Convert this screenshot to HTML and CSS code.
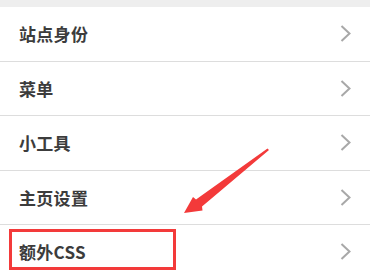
FILE: index.html
```html
<!DOCTYPE html>
<html lang="zh-CN">
  <head>
    <meta charset="UTF-8" />
    <meta name="viewport" content="width=device-width, initial-scale=1.0" />
    <title>自定义</title>
    <link rel="stylesheet" href="styles.css">
  </head>
  <body>
    <div class="topbar"></div>

    <ul class="menu">
      <li class="menu-item">
        <span class="label">站点身份</span>
        <svg class="chevron" width="11" height="17" viewBox="0 0 11 17"><polyline points="1.5,1 9.5,8.5 1.5,16" /></svg>
      </li>
      <li class="menu-item">
        <span class="label">菜单</span>
        <svg class="chevron" width="11" height="17" viewBox="0 0 11 17"><polyline points="1.5,1 9.5,8.5 1.5,16" /></svg>
      </li>
      <li class="menu-item">
        <span class="label">小工具</span>
        <svg class="chevron" width="11" height="17" viewBox="0 0 11 17"><polyline points="1.5,1 9.5,8.5 1.5,16" /></svg>
      </li>
      <li class="menu-item">
        <span class="label">主页设置</span>
        <svg class="chevron" width="11" height="17" viewBox="0 0 11 17"><polyline points="1.5,1 9.5,8.5 1.5,16" /></svg>
      </li>
      <li class="menu-item">
        <span class="label">额外CSS</span>
        <svg class="chevron" width="11" height="17" viewBox="0 0 11 17"><polyline points="1.5,1 9.5,8.5 1.5,16" /></svg>
        <span class="highlight"></span>
      </li>
    </ul>

    <!-- 标注箭头 -->
    <svg class="arrow" width="370" height="279" viewBox="0 0 370 279">
      <polygon points="267.5,148.5 269,150 202,206.5 202.5,210.5 184,213 193,197 196,199.5" fill="#f33a3a" />
    </svg>
  </body>
</html>
```

FILE: styles.css
```css
* {
  margin: 0;
  padding: 0;
  box-sizing: border-box;
}

body {
  font-family: "Noto Sans CJK SC", "Liberation Sans", sans-serif;
  background: #fff;
  width: 370px;
  height: 279px;
  overflow: hidden;
  position: relative;
}

.topbar {
  height: 7px;
  background: #eeeeee;
}

.menu {
  list-style: none;
}

.menu-item {
  position: relative;
  display: flex;
  align-items: center;
  justify-content: space-between;
  height: 54.5px;
  padding: 0 19px 0 19px;
  border-bottom: 1px solid #dddddd;
}

.label {
  font-size: 17px;
  font-weight: bold;
  color: #3c3c3c;
  letter-spacing: 0.3px;
}

.chevron {
  display: block;
  fill: none;
  stroke: #a8a8a8;
  stroke-width: 2;
}

.highlight {
  position: absolute;
  left: 9px;
  top: 4px;
  width: 167px;
  height: 41px;
  border: 3px solid #f33a3a;
}

.arrow {
  position: absolute;
  left: 0;
  top: 0;
}
```
